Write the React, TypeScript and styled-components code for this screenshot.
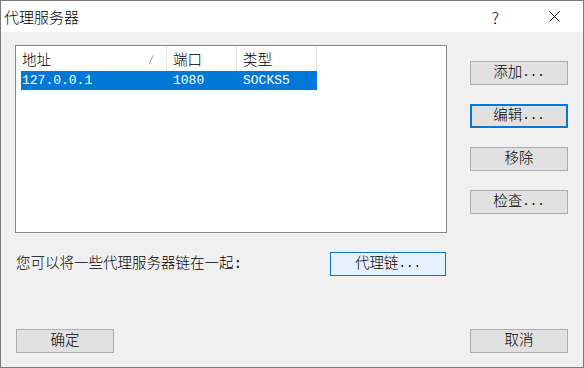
import styled, { createGlobalStyle } from 'styled-components';

const GlobalStyle = createGlobalStyle`
  html, body {
    margin: 0;
    padding: 0;
    background: #f0f0f0;
  }
  body {
    font-family: "Liberation Mono", "Noto Sans CJK SC", monospace;
    font-weight: 300;
    color: #000;
  }
`;

const Window = styled.div`
  box-sizing: border-box;
  width: 584px;
  height: 368px;
  border: 1px solid #7a7a7a;
  background: #f0f0f0;
  display: flex;
  flex-direction: column;
`;

const TitleBar = styled.div`
  height: 31px;
  flex-shrink: 0;
  background: #fff;
  display: flex;
  align-items: center;
  padding-left: 3px;
`;

const Title = styled.span`
  flex: 1;
  font-family: "Noto Sans CJK SC", sans-serif;
  font-size: 15px;
  line-height: 20px;
`;

const HelpGlyph = styled.span`
  font-family: "Noto Sans CJK SC", sans-serif;
  font-weight: 300;
  font-size: 16px;
  line-height: 20px;
  margin-right: 50px;
`;

const CloseIcon = styled.svg`
  width: 11px;
  height: 11px;
  margin-right: 23px;
`;

const Body = styled.div`
  flex: 1;
  display: flex;
  flex-direction: column;
  padding: 13px 15px 14px 14px;
`;

const TopRow = styled.div`
  display: flex;
  align-items: flex-start;
`;

const ListBox = styled.div`
  box-sizing: border-box;
  width: 432px;
  height: 188px;
  border: 1px solid #828790;
  background: #fff;
`;

const Header = styled.div`
  display: flex;
  height: 25px;
`;

const HeaderCell = styled.div<{ $w: number }>`
  box-sizing: border-box;
  width: ${p => p.$w}px;
  display: flex;
  align-items: center;
  padding-left: 6px;
  border-right: 1px solid #e5e5e5;
  font-family: "Noto Sans CJK SC", sans-serif;
  font-size: 14.5px;
`;

const SortMark = styled.svg`
  width: 6px;
  height: 10px;
  margin-left: auto;
  margin-right: 12px;
  margin-top: 3px;
`;

const Row = styled.div<{ $selected?: boolean }>`
  display: flex;
  align-items: center;
  width: 296px;
  height: 19px;
  margin-left: 5px;
  background: ${p => (p.$selected ? '#0078d7' : 'transparent')};
  color: ${p => (p.$selected ? '#fff' : '#000')};
  font-family: "Liberation Mono", monospace;
  font-weight: 400;
  font-size: 13px;
`;

const Cell = styled.div<{ $w: number; $pad: number }>`
  box-sizing: border-box;
  width: ${p => p.$w}px;
  padding-left: ${p => p.$pad}px;
  white-space: nowrap;
`;

const ButtonColumn = styled.div`
  display: flex;
  flex-direction: column;
  gap: 19px;
  margin-left: 23px;
  padding-top: 16px;
`;

const Button = styled.button<{ $focused?: boolean; $hover?: boolean; $w?: number }>`
  box-sizing: border-box;
  width: ${p => p.$w ?? 98}px;
  height: 24px;
  padding: 0;
  display: flex;
  align-items: center;
  justify-content: center;
  border: ${p => (p.$focused ? '2px solid #0078d7' : p.$hover ? '1px solid #0078d7' : '1px solid #adadad')};
  background: ${p => (p.$hover ? '#e5f1fb' : '#e1e1e1')};
  color: #000;
  font-family: "Liberation Mono", "Noto Sans CJK SC", monospace;
  font-weight: 300;
  font-size: 14.5px;
  line-height: 20px;
`;

const Dots = styled.span`
  font-family: "Liberation Mono", monospace;
  font-weight: 400;
  font-size: 12.5px;
`;

const ChainRow = styled.div`
  width: 432px;
  margin-top: 19px;
  display: flex;
  align-items: center;
  justify-content: space-between;
`;

const Label = styled.span`
  padding-left: 1px;
  font-family: "Liberation Mono", "Noto Sans CJK SC", monospace;
  font-size: 14.5px;
  line-height: 20px;
`;

const ChainButton = styled(Button)`
  margin-right: 1px;
`;

const BottomRow = styled.div`
  margin-top: auto;
  padding-left: 1px;
  display: flex;
  justify-content: space-between;
`;

const columns = [
  { title: '地址', width: 151 },
  { title: '端口', width: 70 },
  { title: '类型', width: 80 },
];

const proxies = [{ host: '127.0.0.1', port: '1080', type: 'SOCKS5' }];

const App = () => (
  <>
    <GlobalStyle />
    <Window>
      <TitleBar>
        <Title>代理服务器</Title>
        <HelpGlyph>?</HelpGlyph>
        <CloseIcon viewBox="0 0 11 11">
          <path d="M0.5 0.5 L10.5 10.5 M10.5 0.5 L0.5 10.5" stroke="#000" strokeWidth="1" fill="none" />
        </CloseIcon>
      </TitleBar>
      <Body>
        <TopRow>
          <ListBox>
            <Header>
              {columns.map((c, i) => (
                <HeaderCell key={c.title} $w={c.width}>
                  {c.title}
                  {i === 0 && (
                    <SortMark viewBox="0 0 6 10">
                      <path d="M5 0.5 L1 9.5" stroke="#a8a8a8" strokeWidth="1" fill="none" />
                    </SortMark>
                  )}
                </HeaderCell>
              ))}
            </Header>
            {proxies.map(p => (
              <Row key={p.host} $selected>
                <Cell $w={146} $pad={1}>{p.host}</Cell>
                <Cell $w={70} $pad={6}>{p.port}</Cell>
                <Cell $w={80} $pad={6}>{p.type}</Cell>
              </Row>
            ))}
          </ListBox>
          <ButtonColumn>
            <Button>添加<Dots>...</Dots></Button>
            <Button $focused>编辑<Dots>...</Dots></Button>
            <Button>移除</Button>
            <Button>检查<Dots>...</Dots></Button>
          </ButtonColumn>
        </TopRow>
        <ChainRow>
          <Label>您可以将一些代理服务器链在一起:</Label>
          <ChainButton $hover $w={116}>代理链<Dots>...</Dots></ChainButton>
        </ChainRow>
        <BottomRow>
          <Button>确定</Button>
          <Button>取消</Button>
        </BottomRow>
      </Body>
    </Window>
  </>
);

export default App;
